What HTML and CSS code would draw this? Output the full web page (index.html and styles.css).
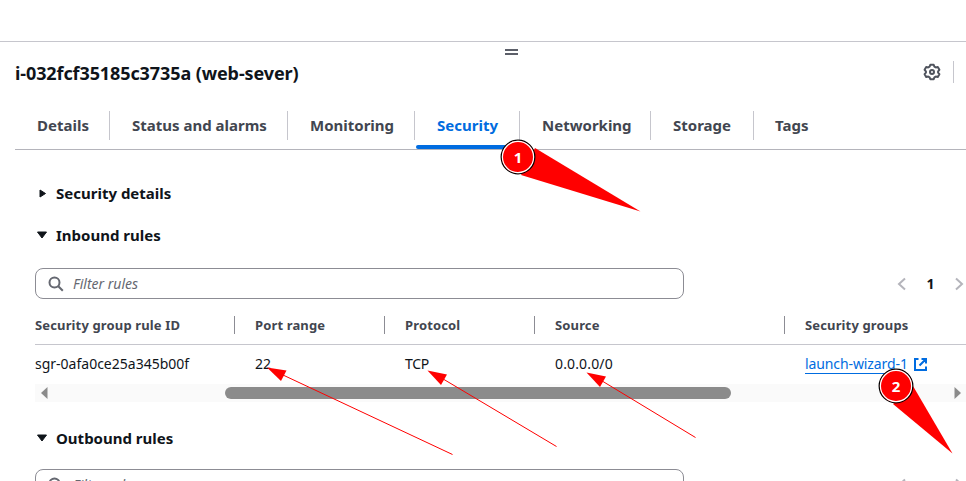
FILE: index.html
```html
<!DOCTYPE html>
<html lang="en">
<head>
<meta charset="utf-8">
<title>Instance details</title>
<link rel="stylesheet" href="styles.css">
</head>
<body>
<main class="panel">
  <div class="handle"><i></i><i></i></div>
  <header class="header">
    <h1><span>i-032fcf35185c3735a (web-sever)</span></h1>
    <div class="tools">
      <svg width="18" height="18" viewBox="0 0 18 18" fill="none" stroke="#50545e" stroke-width="2" stroke-linejoin="round"><path d="M7.3 1.8h3.4l.7 1.8 1.4.8 2-.4 1.600 2.800-1.300 1.500v1.400l1.300 1.500-1.600 2.800-2-.4-1.400.8-.7 1.800H7.300l-.7-1.800-1.400-.8-2 .4-1.600-2.800 1.300-1.500V8.300l-1.300-1.500L3.200 4l2 .4 1.400-.8z"/><circle cx="9" cy="9" r="2"/></svg>
      <span class="rule"></span>
    </div>
  </header>
  <nav class="tabs">
    <a class="tab t1"><span>Details</span></a>
    <a class="tab t2"><span>Status and alarms</span></a>
    <a class="tab t3"><span>Monitoring</span></a>
    <a class="tab t4 active"><span>Security</span></a>
    <a class="tab t5"><span>Networking</span></a>
    <a class="tab t6"><span>Storage</span></a>
    <a class="tab t7"><span>Tags</span></a>
  </nav>
  <section class="content">
    <h2 class="closed"><svg width="12" height="12"><path d="M4 3v7L9.500 6.500z" fill="#0f141a" stroke="#0f141a" stroke-linejoin="round"/></svg><span>Security details</span></h2>
    <h2><svg width="12" height="12"><path d="M1.500 3h9L6 9z" fill="#0f141a" stroke="#0f141a" stroke-linejoin="round"/></svg><span>Inbound rules</span></h2>
    <div class="filterbar">
      <div class="filter"><svg width="16" height="16" viewBox="0 0 16 16" fill="none" stroke="#656871" stroke-width="2"><circle cx="6.500" cy="6.500" r="5"/><path d="m10.300 10.300 4.500 4.500"/></svg><em>Filter rules</em></div>
      <div class="pager"><svg width="10" height="14"><path d="M8 1.500 2 7l6 5.500"/></svg><b>1</b><svg width="10" height="14"><path d="m2 1.500 6 5.500-6 5.500"/></svg></div>
    </div>
    <div class="row head">
      <div><span>Security group rule ID</span></div><div><span>Port range</span></div><div><span>Protocol</span></div><div><span>Source</span></div><div><span>Security groups</span></div>
    </div>
    <div class="row data">
      <div><span>sgr-0afa0ce25a345b00f</span></div><div>22</div><div class="proto">TCP</div><div class="cidr">0.0.0.0/0</div>
      <div class="linkcell"><a>launch-wizard-1</a><svg width="15" height="15" fill="none" stroke="#006ce0" stroke-width="2"><path d="M5.500 2H2v11h11V9.500M8.500 2H13v4.500M13 2 6.500 8.500"/></svg></div>
    </div>
    <div class="scroll"><svg width="8" height="12"><path d="M7.500 0v12L1 6z" fill="#8b8b8b"/></svg><div class="thumb"></div><svg width="8" height="12"><path d="M.5 0v12L7 6z" fill="#8b8b8b"/></svg></div>
    <h2 class="outbound"><svg width="12" height="12"><path d="M1.500 3h9L6 9z" fill="#0f141a" stroke="#0f141a" stroke-linejoin="round"/></svg><span>Outbound rules</span></h2>
    <div class="filterbar second">
      <div class="filter"><svg width="16" height="16" viewBox="0 0 16 16" fill="none" stroke="#656871" stroke-width="2"><circle cx="6.500" cy="6.500" r="5"/><path d="m10.300 10.300 4.500 4.500"/></svg><em>Filter rules</em></div>
      <div class="pager"><svg width="10" height="14"><path d="M8 1.500 2 7l6 5.500"/></svg><svg width="10" height="14"><path d="m2 1.500 6 5.500-6 5.500"/></svg></div>
    </div>
  </section>
</main>
<svg class="notes" width="966" height="481" viewBox="0 0 966 481">
  <g fill="red">
    <path d="M535 148 640.500 211.500 521 175z"/>
    <path d="M913 386 952.500 453.500 893 404z"/>
    <path d="m267 367.500 19.500 3-5.500 10.500z"/>
    <path d="m427.500 370.500 19.500 4-6 10.500z"/>
    <path d="m586.500 372.500 19.500 4-6 10.500z"/>
  </g>
  <path d="m283 375 169.500 79.500M444 379.500l112.500 67M603 381.500l92.500 56" fill="none" stroke="red"/>
  <g fill="red">
    <circle cx="518" cy="157" r="16.800" stroke="#000" stroke-width="1.300"/>
    <circle cx="518" cy="157" r="15.600" stroke="#fff" stroke-width="1.200"/>
    <circle cx="896" cy="386" r="16.800" stroke="#000" stroke-width="1.300"/>
    <circle cx="896" cy="386" r="15.600" stroke="#fff" stroke-width="1.200"/>
  </g>
  <text x="518" y="162.500">1</text>
  <text x="896" y="391.500">2</text>
</svg>
</body>
</html>
```
FILE: styles.css
```css
* { box-sizing: border-box; }
html, body { margin: 0; width: 966px; height: 481px; overflow: hidden; background: #fff; }
body { position: relative; font: 13px/20px "Noto Sans", "Open Sans", sans-serif; color: #0f141a; }
svg { flex: none; display: block; }
span, em, a { white-space: nowrap; }
.panel { padding-top: 41px; }
.handle { height: 19px; border-top: 1px solid #c6c6cd; padding: 7px 0 0 505px; display: flex; flex-direction: column; gap: 2px; }
.handle i { width: 13px; height: 2px; background: #5c5f69; }
.header { height: 51px; display: flex; justify-content: space-between; padding-left: 15px; }
h1 { margin: 0; font-size: 18px; line-height: 26px; font-weight: 700; letter-spacing: -.1px; }
.tools { display: flex; height: 24px; align-items: center; padding-right: 12px; gap: 12px; }
.rule { width: 1px; height: 22px; background: #c6c6cd; }
.tabs { height: 39px; display: flex; margin-left: 15px; border-bottom: 1px solid #b4b4bb; }
.tab { position: relative; height: 29px; line-height: 29px; padding-left: 22px; border-right: 1px solid #c6c6cd; font-size: 15px; font-weight: 700; color: #424650; }
.t1 { width: 95px; } .t2 { width: 178px; } .t3 { width: 127px; } .t4 { width: 105px; } .t5 { width: 131px; } .t6 { width: 103px; } .t7 { border: 0; padding-left: 21px; }
.active { color: #006ce0; }
.active::after { content: ""; position: absolute; left: 1px; right: 0; top: 34px; height: 4px; border-radius: 2px; background: #006ce0; }
.content { padding: 33px 0 0 35px; }
h2 { height: 20px; margin: 0; display: flex; align-items: center; gap: 8px; padding-left: 1px; font-size: 15px; line-height: 20px; }
.closed { margin-bottom: 22px; }
.filterbar { height: 31px; margin-top: 23px; display: flex; justify-content: space-between; }
.filter { width: 649px; height: 31px; border: 1.500px solid #8c8c94; border-radius: 8px; display: flex; align-items: center; gap: 9px; padding-left: 12px; color: #656871; font-size: 14px; }
.pager { width: 67px; margin-right: 2px; padding-top: 1px; display: flex; align-items: center; justify-content: space-between; font-size: 14px; }
.pager path { fill: none; stroke: #b4b4bb; stroke-width: 2; }
.row { display: grid; grid-template-columns: 220px 150px 150px 250px 1fr; }
.head { height: 46px; align-items: center; border-bottom: 1px solid #c6c6cd; padding-top: 7px; font-weight: 700; color: #424650; letter-spacing: .14px; }
.head div + div { position: relative; }
.head div + div::before { content: ""; position: absolute; left: -21px; top: 1px; width: 1px; height: 18px; background: #8c8c94; }
.data { height: 39px; align-items: center; font-size: 14px; padding-bottom: 1px; }
.proto { letter-spacing: -.3px; }
.cidr { letter-spacing: .15px; }
.linkcell { display: flex; gap: 5px; align-items: center; }
.linkcell a { color: #006ce0; border-bottom: 1px solid #006ce0; line-height: 18px; letter-spacing: -.1px; }
.scroll { height: 18px; display: flex; align-items: center; padding: 0 4px 0 5px; background: #fafafa; }
.thumb { width: 506px; height: 12px; margin-left: 177px; margin-right: auto; border-radius: 6px; background: #8b8b8b; }
.outbound { margin-top: 26px; }
.second { margin-top: 21px; }
.notes { position: absolute; left: 0; top: 0; }
.notes text { font: 700 15px "Noto Sans", sans-serif; fill: #fff; text-anchor: middle; }
```
